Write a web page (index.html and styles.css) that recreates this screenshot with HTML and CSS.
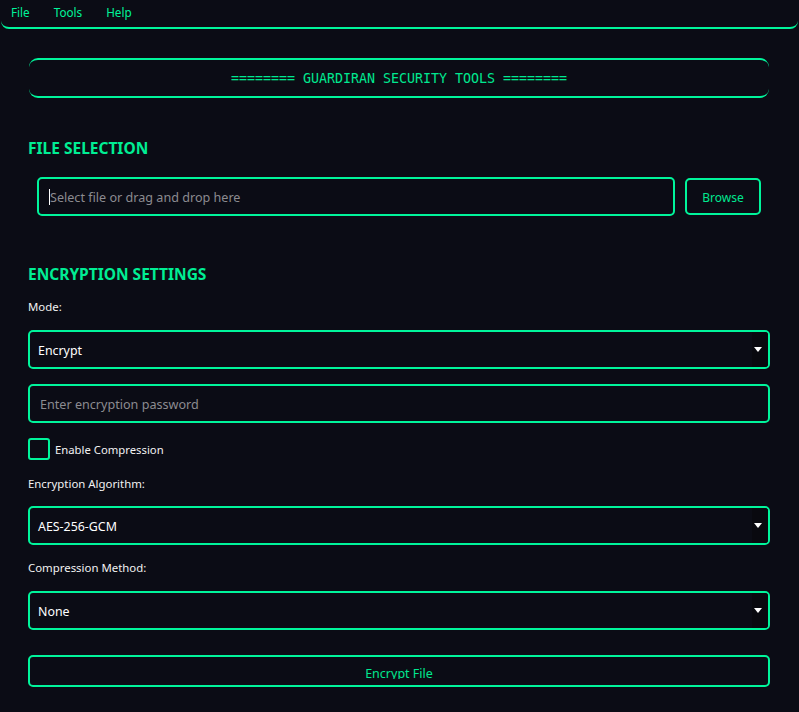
FILE: index.html
```html
<!DOCTYPE html>
<html>
<head>
<meta charset="utf-8">
<link rel="stylesheet" href="styles.css">
</head>
<body>
<div class="menubar">
  <span class="menu-item">File</span>
  <span class="menu-item">Tools</span>
  <span class="menu-item">Help</span>
</div>
<div class="main">
  <div class="header">======== GUARDIRAN SECURITY TOOLS ========</div>

  <div class="section-title first">FILE SELECTION</div>
  <div class="file-row">
    <div class="field file-field"><span class="caret"></span><span class="placeholder">Select file or drag and drop here</span></div>
    <div class="browse">Browse</div>
  </div>

  <div class="section-title second">ENCRYPTION SETTINGS</div>
  <div class="label">Mode:</div>
  <div class="field select"><span class="value">Encrypt</span><span class="drop"><span class="arrow"></span></span></div>
  <div class="field password"><span class="placeholder">Enter encryption password</span></div>
  <div class="check-row"><span class="checkbox"></span><span class="check-label">Enable Compression</span></div>
  <div class="label algo">Encryption Algorithm:</div>
  <div class="field select algo-select"><span class="value">AES-256-GCM</span><span class="drop"><span class="arrow"></span></span></div>
  <div class="label comp">Compression Method:</div>
  <div class="field select comp-select"><span class="value">None</span><span class="drop"><span class="arrow"></span></span></div>
  <div class="action"><span class="action-text">Encrypt File</span></div>
</div>
</body>
</html>
```

FILE: styles.css
```css
* { box-sizing: border-box; }
html, body { margin: 0; padding: 0; }
body {
  background: #0b0c15;
  width: 799px;
  height: 712px;
  overflow: hidden;
  font-family: "Noto Sans", "Open Sans", sans-serif;
  color: #ffffff;
}
.menubar {
  height: 29px;
  margin: 0 1px;
  border-bottom: 2px solid #00f59b;
  border-radius: 0 0 8px 8px;
  display: flex;
  align-items: center;
  padding: 0 0 3px 10px;
  gap: 24px;
}
.menu-item {
  color: #00f59b;
  font-size: 11.7px;
  line-height: 16px;
}
.main {
  padding: 0 29px 0 28px;
  display: flex;
  flex-direction: column;
}
.header {
  margin: 29px 1px 0 1px;
  height: 40px;
  border-top: 2px solid #00f59b;
  border-bottom: 2px solid #00f59b;
  border-radius: 9px;
  display: flex;
  align-items: center;
  justify-content: center;
  font-family: "DejaVu Sans Mono", monospace;
  font-size: 13.3px;
  color: #00e890;
}
.section-title {
  height: 20px;
  line-height: 20px;
  font-weight: 700;
  font-size: 15.5px;
  color: #00ee94;
}
.section-title.first { margin-top: 40px; }
.section-title.second { margin-top: 48px; }
.file-row {
  margin-top: 19px;
  padding: 0 9px;
  height: 39px;
  display: flex;
  align-items: center;
  gap: 10px;
}
.field {
  height: 39px;
  border: 2px solid #00f59b;
  border-radius: 5px;
  display: flex;
  align-items: center;
  font-size: 12.6px;
  position: relative;
  padding-top: 1px;
}
.file-field {
  flex: 1;
  padding-left: 10px;
}
.caret {
  width: 1px;
  height: 16px;
  background: #ffffff;
}
.placeholder { color: #8b8b90; }
.browse {
  width: 76px;
  height: 37px;
  border: 2px solid #00f59b;
  border-radius: 5px;
  color: #00e890;
  font-size: 12px;
  display: flex;
  align-items: center;
  justify-content: center;
  padding-top: 1px;
}
.label {
  height: 16px;
  line-height: 16px;
  font-size: 11.4px;
  margin-top: 15px;
  color: #f2f2f2;
}
.label.algo { margin-top: 16px; }
.select, .password { margin-top: 15px; padding-left: 8px; }
.algo-select { margin-top: 14px; }
.password { padding-left: 10px; }
.value { color: #ffffff; font-size: 12.4px; }
.drop {
  position: absolute;
  right: 0;
  top: 0;
  bottom: 0;
  width: 16px;
  background: #09090f;
  border-radius: 0 3px 3px 0;
  display: flex;
  align-items: center;
  justify-content: center;
}
.arrow {
  width: 0;
  height: 0;
  border-left: 4px solid transparent;
  border-right: 4px solid transparent;
  border-top: 5px solid #ffffff;
  margin-left: -4px;
}
.check-row {
  margin-top: 15px;
  height: 22px;
  display: flex;
  align-items: center;
  gap: 5px;
}
.checkbox {
  width: 22px;
  height: 22px;
  border: 2px solid #00f59b;
  border-radius: 3px;
}
.check-label { font-size: 11.3px; color: #f2f2f2; }
.action {
  margin-top: 25px;
  height: 32px;
  border: 2px solid #00f59b;
  border-radius: 5px;
  display: flex;
  justify-content: center;
  padding-top: 8px;
}
.action-text {
  color: #00e890;
  font-size: 12.5px;
  line-height: 17px;
  height: 14px;
  overflow: hidden;
}
```
